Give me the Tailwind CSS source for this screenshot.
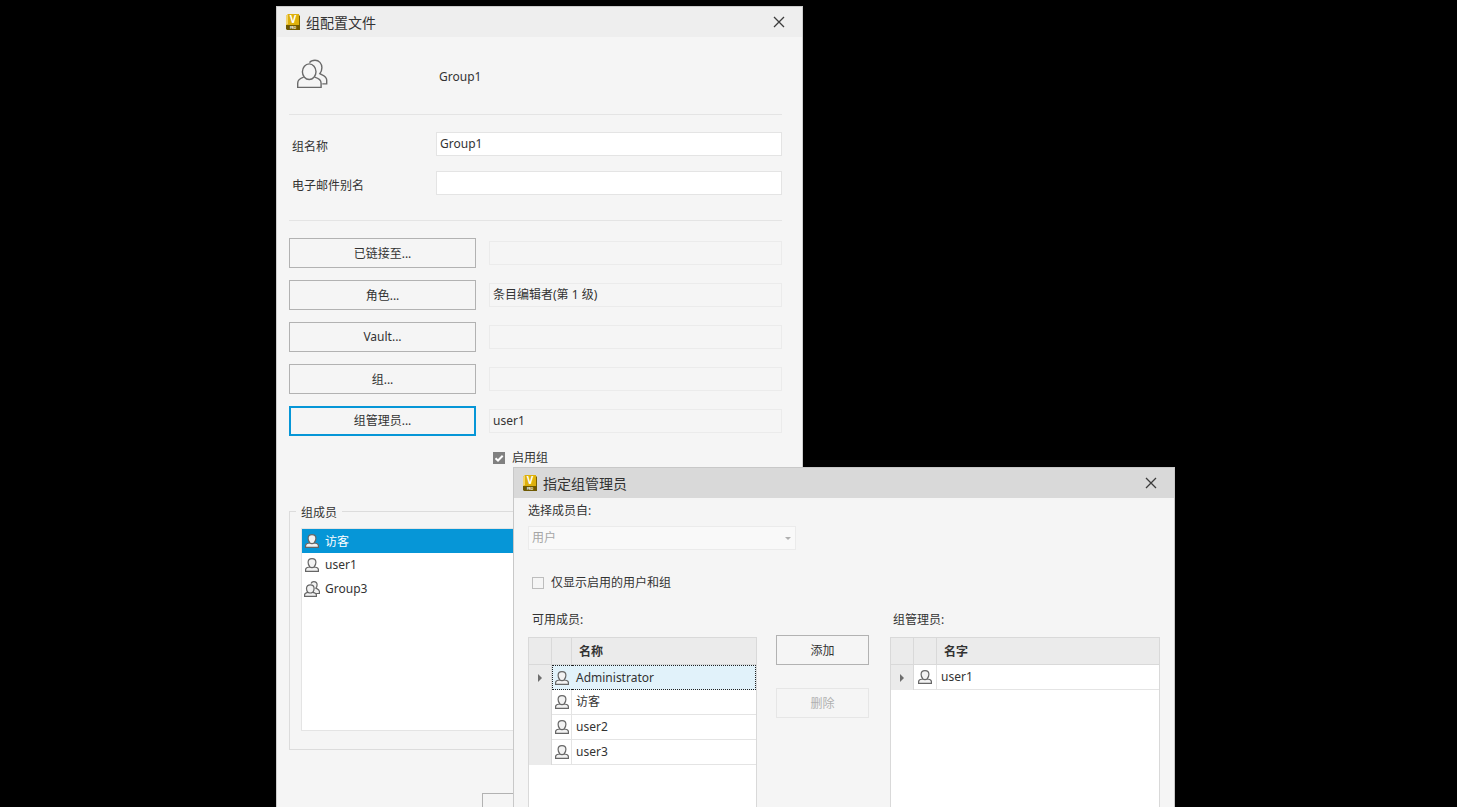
<!DOCTYPE html>
<html lang="zh-CN">

<head>
    <meta charset="UTF-8">
    <meta name="viewport" content="width=device-width, initial-scale=1.0">
    <title>组配置文件</title>
    <script src="https://cdn.jsdelivr.net/npm/@tailwindcss/browser@4"></script>
</head>

<body class="relative h-screen overflow-hidden bg-black font-['Noto_Sans','Noto_Sans_CJK_SC',sans-serif] text-xs text-[#333333]">
    <!-- 图标 -->
    <svg class="hidden">
        <symbol id="logo" viewBox="0 0 14 16">
            <path d="M2 0h11v13H0V2z" fill="#ddb00c"/>
            <path d="M2 0 0 2v9l2-1z" fill="#f3d46a"/>
            <path d="M13 1l1 1v14h-1z" fill="#7a6200"/>
            <path d="M0 11h14v5H1l-1-1z" fill="#6f5900"/>
            <text x="7" y="9" text-anchor="middle" font-size="10" font-weight="700" fill="#fff">V</text>
            <text x="7" y="15" text-anchor="middle" font-size="3" font-weight="700" fill="#fff">PRO</text>
        </symbol>
        <symbol id="user" viewBox="0 0 14 14">
            <path d="M.6 13.400V11.500C.6 9.700 2 9.300 4.200 9 4.700 8.900 4.800 8.500 4.400 8 3.500 7 3.100 5.800 3.100 4.300 3.100 2 4.600.6 7 .6s3.900 1.400 3.900 3.700c0 1.500-.4 2.700-1.300 3.700-.4.500-.3.900.2 1 2.200.3 3.600.7 3.600 2.500v1.900z" fill="#f2f2f2" stroke="#666" stroke-width="1.200"/>
            <path d="M4.200 8.700c1.700 1.100 3.900 1.100 5.600 0" fill="none" stroke="#666" stroke-width="1.100"/>
        </symbol>
        <symbol id="users" viewBox="0 0 16 16">
            <path d="M7 2.500C7.500 1.200 8.400.6 9.800.6c2 0 3.300 1.300 3.300 3.200 0 1.500-.5 2.500-1.200 3.300 1.500.8 3.500 1.600 3.500 3.200v2.200H12" fill="#f2f2f2" stroke="#666" stroke-width="1.200"/>
            <path d="M.6 15.400v-1.600c0-1.400 1-2 3.200-2.500C3 10.300 2.500 9.200 2.500 7.500 2.500 5.200 4 3.800 6.300 3.800s3.800 1.400 3.800 3.700c0 1.700-.5 2.800-1.300 3.800 2.400.5 3.600 1.100 3.600 2.500v1.600z" fill="#f2f2f2" stroke="#666" stroke-width="1.200"/>
            <path d="M3.800 11.200c1.500.9 3.500.9 5 0" fill="none" stroke="#666" stroke-width="1.100"/>
        </symbol>
        <symbol id="close" viewBox="0 0 12 12">
            <path d="M1 1l10 10M11 1 1 11" fill="none" stroke="#3c3c3c" stroke-width="1.300"/>
        </symbol>
    </svg>

    <!-- 组配置文件 -->
    <section class="absolute left-[276px] top-1.5 flex min-h-full w-[527px] flex-col border border-[#cccccc] bg-[#f5f5f5]">
        <header class="flex h-[30px] items-center bg-[#eeeeee] pl-[9px] pr-[17px]">
            <svg class="mr-1.5 h-4 w-3.5"><use href="#logo"/></svg>
            <h1 class="grow pt-0.5 text-sm">组配置文件</h1>
            <button type="button" aria-label="关闭"><svg class="h-3 w-3"><use href="#close"/></svg></button>
        </header>

        <div class="flex flex-col pl-3 pr-5">
            <div class="flex h-[78px] items-center border-b border-[#e4e4e4]">
                <div class="w-[150px] pb-1 pl-2">
                    <svg class="h-[30px] w-8" viewBox="0 0 32 30" fill="none" stroke="#6a6a6a" stroke-width="1.400">
                        <path d="M12.500 3.600C13.600 2 15.700 1.200 18 1.200c4 0 6.900 3.300 6.900 7.600 0 2.300-.8 4.300-2.100 5.900 3 1.600 6.900 2.400 6.900 6.400v3.800h-4.400"/>
                        <ellipse cx="12.200" cy="12.700" rx="6.800" ry="7.800"/>
                        <path d="M6.700 18.200C3 19.300.7 20.700.7 24.200v4.200h23.400v-4.200c0-3.500-2.400-4.900-6.400-6"/>
                    </svg>
                </div>
                <span class="pt-0.5">Group1</span>
            </div>

            <div class="grid grid-cols-[147px_1fr] gap-y-[15px] border-b border-[#e4e4e4] pb-[25px] pt-[17px]">
                <label for="groupName" class="pl-[3px] pt-[7px] leading-4">组名称</label>
                <input type="text" id="groupName" value="Group1" class="h-6 w-full border border-[#e4e4e4] bg-white px-[3px] pb-0.5">
                <label for="emailAlias" class="pl-[3px] pt-[7px] leading-4">电子邮件别名</label>
                <input type="text" id="emailAlias" class="h-6 w-full border border-[#e4e4e4] bg-white px-[3px] pb-0.5">
            </div>

            <div class="grid grid-cols-[187px_1fr] items-center gap-x-[13px] gap-y-3 pt-[17px]">
                <button type="button" id="linkedBtn" class="h-[30px] border border-[#b2b2b2] pt-0.5">已链接至...</button>
                <input type="text" readonly aria-labelledby="linkedBtn" class="h-6 w-full border border-[#ebebeb] px-[3px] pb-0.5">
                <button type="button" id="roleBtn" class="h-[30px] border border-[#b2b2b2] pt-0.5">角色...</button>
                <input type="text" readonly aria-labelledby="roleBtn" value="条目编辑者(第 1 级)" class="h-6 w-full border border-[#ebebeb] px-[3px] pb-0.5">
                <button type="button" id="vaultBtn" class="h-[30px] border border-[#b2b2b2]">Vault...</button>
                <input type="text" readonly aria-labelledby="vaultBtn" class="h-6 w-full border border-[#ebebeb] px-[3px] pb-0.5">
                <button type="button" id="groupBtn" class="h-[30px] border border-[#b2b2b2] pt-0.5">组...</button>
                <input type="text" readonly aria-labelledby="groupBtn" class="h-6 w-full border border-[#ebebeb] px-[3px] pb-0.5">
                <button type="button" id="adminBtn" class="h-[30px] border-2 border-[#0696d7]">组管理员...</button>
                <input type="text" readonly aria-labelledby="adminBtn" value="user1" class="h-6 w-full border border-[#ebebeb] px-[3px] pb-0.5">
            </div>

            <div class="flex items-center pl-[204px] pt-3.5">
                <span class="relative mr-[7px] h-3 w-3">
                    <input type="checkbox" id="enableGroup" checked class="block h-3 w-3 appearance-none bg-[#808080]">
                    <svg class="pointer-events-none absolute inset-0 h-3 w-3" viewBox="0 0 12 12"><path d="M2.500 6.200 5 8.500l4.700-4.700" fill="none" stroke="#fff" stroke-width="2"/></svg>
                </span>
                <label for="enableGroup" class="leading-4">启用组</label>
            </div>

            <fieldset class="mt-[35px] h-[249px] border border-[#dcdcdc] px-[11px] pt-[7px]">
                <legend class="-ml-[5px] px-[5px] pt-1 leading-4">组成员</legend>
                <ul class="h-[203px] border border-[#e4e4e4] bg-white leading-6">
                    <li class="flex h-6 items-center bg-[#0696d7] pl-[3px] text-white"><svg class="mr-1.5 h-3.5 w-3.5"><use href="#user"/></svg><span class="pt-0.5">访客</span></li>
                    <li class="flex h-6 items-center pl-[3px]"><svg class="mr-1.5 h-3.5 w-3.5"><use href="#user"/></svg>user1</li>
                    <li class="flex h-6 items-center pl-0.5"><svg class="mr-[5px] h-4 w-4"><use href="#users"/></svg>Group3</li>
                </ul>
            </fieldset>

            <div class="flex justify-end pt-[43px]">
                <button type="button" class="h-[30px] w-[300px] border border-[#b2b2b2]"></button>
            </div>
        </div>
    </section>

    <!-- 指定组管理员 -->
    <section class="absolute bottom-0 left-[513px] top-[467px] flex w-[662px] flex-col border border-b-0 border-[#c8c8c8] bg-[#f5f5f5]">
        <header class="flex h-[30px] shrink-0 items-center bg-[#d9d9d9] pl-[9px] pr-[17px]">
            <svg class="mr-1.5 h-4 w-3.5"><use href="#logo"/></svg>
            <h2 class="grow pt-0.5 text-sm">指定组管理员</h2>
            <button type="button" aria-label="关闭"><svg class="h-3 w-3"><use href="#close"/></svg></button>
        </header>

        <div class="flex grow flex-col px-3.5 pt-[5px]">
            <label for="memberFrom" class="leading-4">选择成员自:</label>
            <div class="relative mt-[7px] w-[268px]">
                <select id="memberFrom" disabled class="block h-6 w-full appearance-none border border-[#ebebeb] bg-[#f9f9f9] px-[3px] text-[#a6a6a6] opacity-100">
                    <option>用户</option>
                </select>
                <svg class="pointer-events-none absolute right-[5px] top-[11px] h-[3px] w-[6px]" viewBox="0 0 6 3"><path d="M0 0h6L3 3z" fill="#b0b0b0"/></svg>
            </div>

            <div class="mt-[25px] flex items-center pl-1">
                <input type="checkbox" id="onlyEnabled" class="mr-[7px] h-3 w-3 appearance-none border border-[#bdbdbd]">
                <label for="onlyEnabled" class="leading-4">仅显示启用的用户和组</label>
            </div>

            <div class="mt-[21px] grid grow grid-cols-[229px_93px_1fr] gap-x-[19px]">
                <div class="flex flex-col">
                    <h3 id="availableTitle" class="pl-1 leading-4">可用成员:</h3>
                    <div class="mt-[9px] grow border border-b-0 border-[#d9d9d9] bg-white">
                        <table aria-labelledby="availableTitle" class="w-full table-fixed border-separate border-spacing-0 text-left">
                            <colgroup><col class="w-[23px]"><col class="w-5"><col></colgroup>
                            <thead>
                                <tr class="h-[27px] bg-[#ebebeb]">
                                    <th class="border-b border-r border-[#d9d9d9]"></th>
                                    <th class="border-b border-r border-[#d9d9d9]"></th>
                                    <th class="border-b border-[#d9d9d9] pl-[7px] pt-0.5 font-bold">名称</th>
                                </tr>
                            </thead>
                            <tbody>
                                <tr class="h-[25px] bg-[#e1f2fa]">
                                    <td class="border-r border-[#d9d9d9] bg-[#ebebeb]"><svg class="ml-[9px] h-2 w-1" viewBox="0 0 4 8"><path d="M0 0l4 4-4 4z" fill="#6e6e6e"/></svg></td>
                                    <td class="border-y border-l border-dotted border-[#222222] pl-0.5"><svg class="h-3.5 w-3.5"><use href="#user"/></svg></td>
                                    <td class="border-y border-r border-dotted border-[#222222] pl-1">Administrator</td>
                                </tr>
                                <tr class="h-[25px]">
                                    <td class="border-r border-[#d9d9d9] bg-[#ebebeb]"></td>
                                    <td class="border-b border-r border-[#e4e4e4] pl-[3px]"><svg class="h-3.5 w-3.5"><use href="#user"/></svg></td>
                                    <td class="border-b border-[#e4e4e4] pl-1">访客</td>
                                </tr>
                                <tr class="h-[25px]">
                                    <td class="border-r border-[#d9d9d9] bg-[#ebebeb]"></td>
                                    <td class="border-b border-r border-[#e4e4e4] pl-[3px]"><svg class="h-3.5 w-3.5"><use href="#user"/></svg></td>
                                    <td class="border-b border-[#e4e4e4] pl-1">user2</td>
                                </tr>
                                <tr class="h-[25px]">
                                    <td class="border-r border-[#d9d9d9] bg-[#ebebeb]"></td>
                                    <td class="border-b border-r border-[#e4e4e4] pl-[3px]"><svg class="h-3.5 w-3.5"><use href="#user"/></svg></td>
                                    <td class="border-b border-[#e4e4e4] pl-1">user3</td>
                                </tr>
                            </tbody>
                        </table>
                    </div>
                </div>

                <div class="flex flex-col gap-[23px] pt-[23px]">
                    <button type="button" class="h-[30px] border border-[#b2b2b2] pt-0.5">添加</button>
                    <button type="button" disabled class="h-[30px] border border-[#e6e6e6] pt-0.5 text-[#b0b0b0]">删除</button>
                </div>

                <div class="ml-0.5 flex flex-col">
                    <h3 id="adminTitle" class="pl-[3px] leading-4">组管理员:</h3>
                    <div class="mt-[9px] grow border border-b-0 border-[#d9d9d9] bg-white">
                        <table aria-labelledby="adminTitle" class="w-full table-fixed border-separate border-spacing-0 text-left">
                            <colgroup><col class="w-[23px]"><col class="w-[23px]"><col></colgroup>
                            <thead>
                                <tr class="h-[27px] bg-[#ebebeb]">
                                    <th class="border-b border-r border-[#d9d9d9]"></th>
                                    <th class="border-b border-r border-[#d9d9d9]"></th>
                                    <th class="border-b border-[#d9d9d9] pl-[7px] pt-0.5 font-bold">名字</th>
                                </tr>
                            </thead>
                            <tbody>
                                <tr class="h-[25px]">
                                    <td class="border-r border-[#d9d9d9] bg-[#ebebeb]"><svg class="ml-[9px] h-2 w-1" viewBox="0 0 4 8"><path d="M0 0l4 4-4 4z" fill="#6e6e6e"/></svg></td>
                                    <td class="border-b border-r border-[#e4e4e4] pl-1"><svg class="h-3.5 w-3.5"><use href="#user"/></svg></td>
                                    <td class="border-b border-[#e4e4e4] pl-1">user1</td>
                                </tr>
                            </tbody>
                        </table>
                    </div>
                </div>
            </div>
        </div>
    </section>
</body>

</html>
